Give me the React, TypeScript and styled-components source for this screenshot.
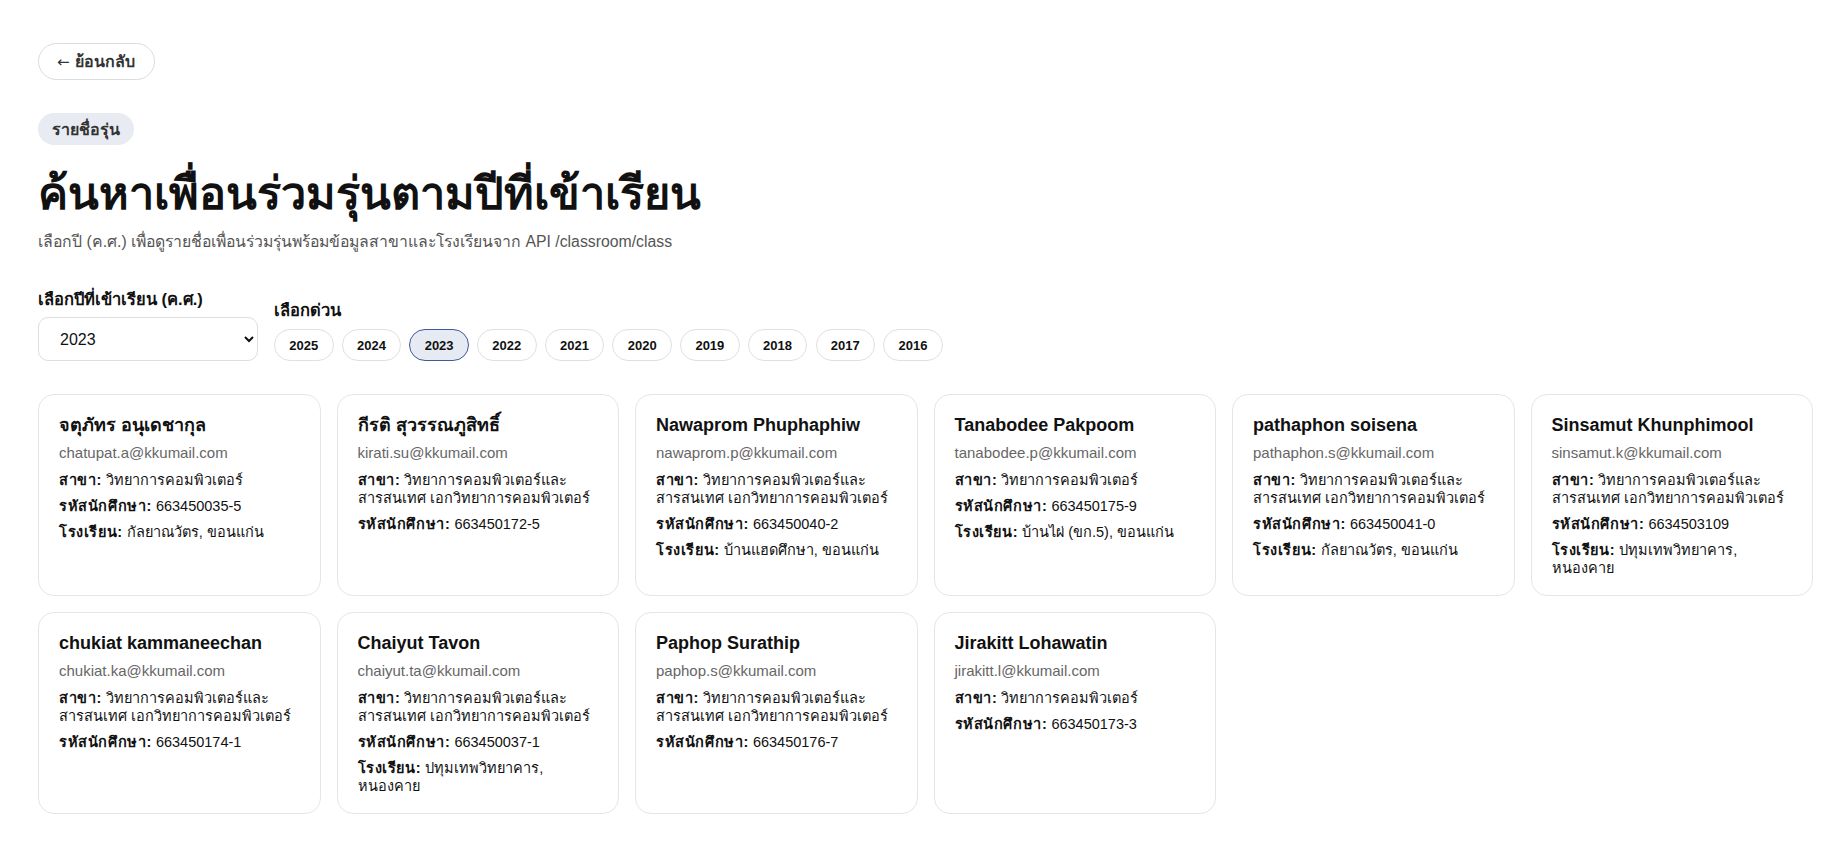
import React, { useState } from "react";
import styled, { createGlobalStyle } from "styled-components";

const GlobalStyle = createGlobalStyle`
  html, body { margin: 0; padding: 0; background: #ffffff; }
  body {
    font-family: "Liberation Sans", Arial, sans-serif;
    color: #111111;
  }
  * { box-sizing: border-box; }
`;

const Page = styled.main`
  padding: 43px 16px 40px 38px;
  display: flex;
  flex-direction: column;
  align-items: flex-start;
`;

const BackButton = styled.button`
  height: 37px;
  padding: 0 19px 0 18px;
  border: 1px solid #dcdcdc;
  border-radius: 999px;
  background: #ffffff;
  font-family: inherit;
  font-size: 16px;
  font-weight: 600;
  color: #333333;
  cursor: pointer;
  display: inline-flex;
  align-items: center;
  gap: 5px;
`;

const Arrow = styled.span`
  font-family: "DejaVu Sans", sans-serif;
  font-size: 15px;
  font-weight: 400;
`;

const Badge = styled.span`
  margin-top: 33px;
  height: 32px;
  display: inline-flex;
  align-items: center;
  padding: 0 14px;
  border-radius: 999px;
  background: #e8ebf2;
  font-size: 16px;
  font-weight: 600;
  color: #333333;
`;

const Title = styled.h1`
  margin: 22px 0 0;
  font-size: 45px;
  line-height: 54px;
  font-weight: 700;
  color: #111111;
`;

const Subtitle = styled.p`
  margin: 10px 0 0;
  font-size: 15.8px;
  line-height: 22px;
  color: #555555;
`;

const Controls = styled.div`
  margin-top: 36px;
  display: flex;
  align-items: flex-end;
  gap: 16px;
`;

const Field = styled.div`
  display: flex;
  flex-direction: column;
  gap: 8px;
`;

const FieldLabel = styled.label`
  font-size: 16.5px;
  line-height: 20px;
  font-weight: 600;
  color: #111111;
`;

const Select = styled.select`
  width: 220px;
  height: 44px;
  padding: 0 7px 0 17px;
  border: 1px solid #dedede;
  border-radius: 10px;
  background: #ffffff;
  font-family: inherit;
  font-size: 16px;
  color: #111111;
`;

const QuickField = styled.div`
  display: flex;
  flex-direction: column;
  gap: 9px;
`;

const Chips = styled.div`
  display: flex;
  gap: 8.2px;
`;

const Chip = styled.button<{ $active?: boolean }>`
  width: 59.5px;
  height: 32px;
  border-radius: 16px;
  border: 1px solid ${(p) => (p.$active ? "#3f5a9a" : "#e0e0e0")};
  background: ${(p) => (p.$active ? "#e6eaf3" : "#ffffff")};
  font-family: inherit;
  font-size: 13px;
  font-weight: 700;
  color: #111111;
  cursor: pointer;
  padding: 0;
`;

const Grid = styled.section`
  margin-top: 33px;
  width: 100%;
  display: grid;
  grid-template-columns: repeat(6, 1fr);
  gap: 16px 16px;
`;

const Card = styled.article`
  min-height: 201px;
  padding: 20px 20px 18px;
  border: 1px solid #e6e6e6;
  border-radius: 16px;
  background: #ffffff;
  display: flex;
  flex-direction: column;
  gap: 8px;
`;

const Name = styled.h3`
  margin: 0 0 1px;
  font-size: 18px;
  line-height: 20px;
  font-weight: 700;
  color: #111111;
`;

const Email = styled.div`
  margin-bottom: 1px;
  font-size: 15px;
  line-height: 18px;
  color: #666666;
`;

const Info = styled.div`
  font-size: 14.5px;
  line-height: 18px;
  color: #111111;
`;

const InfoLabel = styled.b`
  font-weight: 700;
  letter-spacing: 0.6px;
`;

type Person = {
  name: string;
  email: string;
  major: string;
  id: string;
  school?: string;
};

const CS = "วิทยาการคอมพิวเตอร์";
const CSIT = "วิทยาการคอมพิวเตอร์และสารสนเทศ เอกวิทยาการคอมพิวเตอร์";

const people: Person[] = [
  { name: "จตุภัทร อนุเดชากุล", email: "chatupat.a@kkumail.com", major: CS, id: "663450035-5", school: "กัลยาณวัตร, ขอนแก่น" },
  { name: "กีรติ สุวรรณภูสิทธิ์", email: "kirati.su@kkumail.com", major: CSIT, id: "663450172-5" },
  { name: "Nawaprom Phuphaphiw", email: "nawaprom.p@kkumail.com", major: CSIT, id: "663450040-2", school: "บ้านแฮดศึกษา, ขอนแก่น" },
  { name: "Tanabodee Pakpoom", email: "tanabodee.p@kkumail.com", major: CS, id: "663450175-9", school: "บ้านไผ่ (ขก.5), ขอนแก่น" },
  { name: "pathaphon soisena", email: "pathaphon.s@kkumail.com", major: CSIT, id: "663450041-0", school: "กัลยาณวัตร, ขอนแก่น" },
  { name: "Sinsamut Khunphimool", email: "sinsamut.k@kkumail.com", major: CSIT, id: "6634503109", school: "ปทุมเทพวิทยาคาร, หนองคาย" },
  { name: "chukiat kammaneechan", email: "chukiat.ka@kkumail.com", major: CSIT, id: "663450174-1" },
  { name: "Chaiyut Tavon", email: "chaiyut.ta@kkumail.com", major: CSIT, id: "663450037-1", school: "ปทุมเทพวิทยาคาร, หนองคาย" },
  { name: "Paphop Surathip", email: "paphop.s@kkumail.com", major: CSIT, id: "663450176-7" },
  { name: "Jirakitt Lohawatin", email: "jirakitt.l@kkumail.com", major: CS, id: "663450173-3" },
];

const years = [2025, 2024, 2023, 2022, 2021, 2020, 2019, 2018, 2017, 2016];

export default function App() {
  const [year, setYear] = useState(2023);
  return (
    <>
      <GlobalStyle />
      <Page>
        <BackButton><Arrow>←</Arrow>ย้อนกลับ</BackButton>
        <Badge>รายชื่อรุ่น</Badge>
        <Title>ค้นหาเพื่อนร่วมรุ่นตามปีที่เข้าเรียน</Title>
        <Subtitle>เลือกปี (ค.ศ.) เพื่อดูรายชื่อเพื่อนร่วมรุ่นพร้อมข้อมูลสาขาและโรงเรียนจาก API /classroom/class</Subtitle>
        <Controls>
          <Field>
            <FieldLabel htmlFor="year">เลือกปีที่เข้าเรียน (ค.ศ.)</FieldLabel>
            <Select id="year" value={year} onChange={(e) => setYear(Number(e.target.value))}>
              {years.map((y) => (
                <option key={y} value={y}>{y}</option>
              ))}
            </Select>
          </Field>
          <QuickField>
            <FieldLabel as="span">เลือกด่วน</FieldLabel>
            <Chips>
              {years.map((y) => (
                <Chip key={y} $active={y === year} onClick={() => setYear(y)}>{y}</Chip>
              ))}
            </Chips>
          </QuickField>
        </Controls>
        <Grid>
          {people.map((p) => (
            <Card key={p.email}>
              <Name>{p.name}</Name>
              <Email>{p.email}</Email>
              <Info><InfoLabel>สาขา:</InfoLabel> {p.major}</Info>
              <Info><InfoLabel>รหัสนักศึกษา:</InfoLabel> {p.id}</Info>
              {p.school && <Info><InfoLabel>โรงเรียน:</InfoLabel> {p.school}</Info>}
            </Card>
          ))}
        </Grid>
      </Page>
    </>
  );
}
